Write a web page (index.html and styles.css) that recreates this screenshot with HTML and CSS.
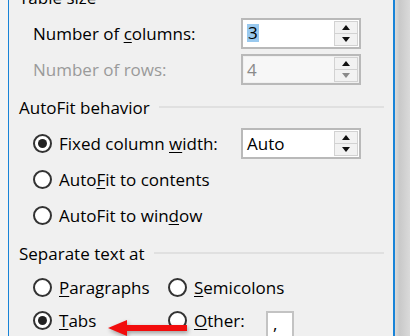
FILE: index.html
```html
<!DOCTYPE html>
<html lang="en">
<head>
    <meta charset="UTF-8">
    <title>Convert Text to Table</title>
    <link rel="stylesheet" href="styles.css">
</head>
<body>
    <div class="screen">
        <div class="outside"></div>

        <div class="dialog">
            <!-- Table size -->
            <section class="group group-first">
                <div class="group-title"><span>Table size</span><i class="rule"></i></div>
                <div class="row">
                    <label class="field-label">Number of <u>c</u>olumns:</label>
                    <div class="spinner">
                        <span class="value"><span class="selected">3</span></span>
                        <div class="spin-buttons">
                            <span class="spin up"></span>
                            <span class="spin down"></span>
                        </div>
                    </div>
                </div>
                <div class="row">
                    <label class="field-label disabled">Number of rows:</label>
                    <div class="spinner is-disabled">
                        <span class="value">4</span>
                        <div class="spin-buttons">
                            <span class="spin up"></span>
                            <span class="spin down"></span>
                        </div>
                    </div>
                </div>
            </section>

            <!-- AutoFit behavior -->
            <section class="group">
                <div class="group-title"><span>AutoFit behavior</span><i class="rule"></i></div>
                <div class="row">
                    <label class="radio field-label"><span class="dot checked"></span><span>Fixed column <u>w</u>idth:</span></label>
                    <div class="spinner">
                        <span class="value">Auto</span>
                        <div class="spin-buttons">
                            <span class="spin up"></span>
                            <span class="spin down"></span>
                        </div>
                    </div>
                </div>
                <div class="row">
                    <label class="radio"><span class="dot"></span><span>Auto<u>F</u>it to contents</span></label>
                </div>
                <div class="row">
                    <label class="radio"><span class="dot"></span><span>AutoFit to win<u>d</u>ow</span></label>
                </div>
            </section>

            <!-- Separate text at -->
            <section class="group">
                <div class="group-title"><span>Separate text at</span><i class="rule"></i></div>
                <div class="row row-tight">
                    <label class="radio col-a"><span class="dot"></span><span><u>P</u>aragraphs</span></label>
                    <label class="radio"><span class="dot"></span><span><u>S</u>emicolons</span></label>
                </div>
                <div class="row row-tight">
                    <label class="radio col-a"><span class="dot checked"></span><span><u>T</u>abs</span></label>
                    <label class="radio opt-other"><span class="dot"></span><span><u>O</u>ther:</span></label>
                    <div class="textbox">,</div>
                </div>
            </section>

            <svg class="callout" width="100" height="24" viewBox="0 0 100 24">
                <polygon points="8,14 27,6 27,11 87,11 87,17 27,17 27,22" fill="#f20d0d"/>
            </svg>
        </div>

        <div class="shadow"></div>
    </div>
</body>
</html>
```

FILE: styles.css
```css
html, body {
    margin: 0;
    padding: 0;
    width: 410px;
    height: 336px;
    overflow: hidden;
}

body {
    font-family: "Open Sans", "Noto Sans", Arial, sans-serif;
    font-size: 17px;
    color: #000;
    background-color: #f3f3f3;
}

.screen {
    display: flex;
    height: 336px;
}

.outside {
    width: 8px;
    background-color: #f4f4f4;
}

.dialog {
    position: relative;
    width: 387px;
    border-left: 1px solid #1883d7;
    border-right: 2px solid #1883d7;
    background-color: #f0f0f0;
    padding-left: 10px;
    padding-right: 9px;
    box-sizing: border-box;
}

.shadow {
    flex: 1;
    background: linear-gradient(to right, #d9d9d9, #c9c9c9 30%, #dadada);
}

.group {
    display: flex;
    flex-direction: column;
    padding-bottom: 8px;
}

.group-first {
    margin-top: -15px;
}

.group-title {
    display: flex;
    align-items: center;
    height: 24px;
    margin-bottom: 6px;
}

.group-title .rule {
    flex: 1;
    height: 2px;
    margin-left: 9px;
    background-color: #e0e0e0;
}

.row {
    display: flex;
    align-items: center;
    height: 36px;
    padding-left: 14px;
}

.row-tight {
    height: 33px;
}

.field-label {
    width: 208px;
}

.disabled {
    color: #9a9a9a;
}

u {
    text-decoration-thickness: 1px;
    text-underline-offset: 2px;
}

/* spin boxes */
.spinner {
    display: flex;
    align-items: stretch;
    width: 120px;
    height: 31px;
    box-sizing: border-box;
    border: 2px solid #b9b9b9;
    background-color: #fff;
    padding: 1px 1px 1px 4px;
}

.spinner .value {
    flex: 1;
    display: flex;
    align-items: center;
}

.spinner .selected {
    background-color: #99c9ef;
    padding: 0 1px;
    line-height: 18px;
}

.spinner.is-disabled {
    background-color: #f0f0f0;
    color: #8a8a8a;
}

.spinner.is-disabled .value {
    background-color: #f7f7f7;
    margin-left: -3px;
    padding-left: 3px;
}

.spin-buttons {
    display: flex;
    flex-direction: column;
    width: 24px;
}

.spin {
    flex: 1;
    display: flex;
    align-items: center;
    justify-content: center;
    border: 1px solid #d2d2d2;
    background-color: #f2f2f2;
}

.spin + .spin {
    border-top: none;
}

.spin::after {
    content: "";
    border-left: 4px solid transparent;
    border-right: 4px solid transparent;
}

.spin.up::after {
    border-bottom: 5px solid #111;
}

.spin.down::after {
    border-top: 5px solid #111;
}

.is-disabled .spin.down::after {
    border-top-color: #8a8a8a;
}

/* radio buttons */
.radio {
    display: flex;
    align-items: center;
    white-space: nowrap;
}

.dot {
    width: 19px;
    height: 19px;
    box-sizing: border-box;
    border: 2px solid #333;
    border-radius: 50%;
    background-color: #fff;
    margin-right: 7px;
    display: flex;
    align-items: center;
    justify-content: center;
    flex-shrink: 0;
}

.dot.checked::after {
    content: "";
    width: 9px;
    height: 9px;
    border-radius: 50%;
    background-color: #222;
}

.col-a {
    width: 135px;
}

.opt-other {
    width: 98px;
}

.textbox {
    width: 28px;
    height: 32px;
    margin-top: 12px;
    box-sizing: border-box;
    border: 2px solid #c3c3c3;
    background-color: #fff;
    padding-left: 5px;
    line-height: 22px;
}

/* red annotation arrow */
.callout {
    position: absolute;
    left: 91px;
    top: 314px;
    filter: drop-shadow(1px 2px 2px rgba(0, 0, 0, 0.35));
}
```
